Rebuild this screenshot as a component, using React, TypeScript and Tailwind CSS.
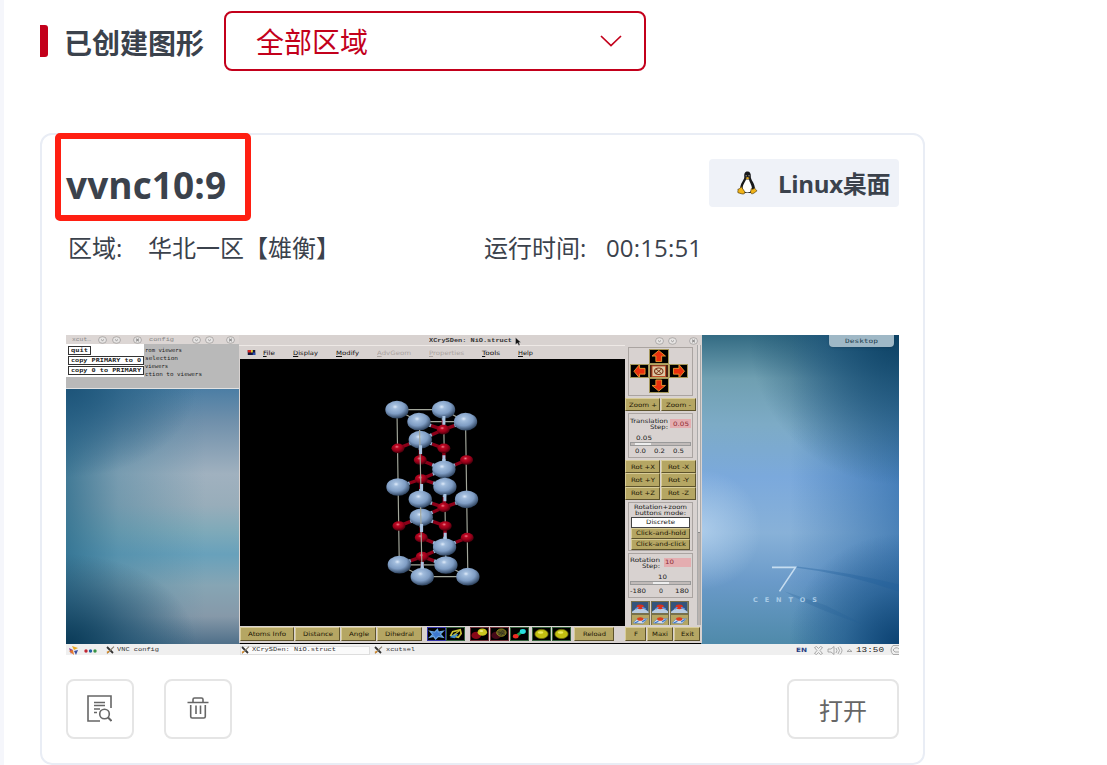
import { useLayoutEffect, useRef, useState, type ReactNode } from 'react';

/** Stretches one line of text horizontally to the width of its box. */
function Fit({ className, children }: { className: string; children: ReactNode }) {
  const box = useRef<HTMLSpanElement>(null);
  const text = useRef<HTMLSpanElement>(null);
  const [scale, setScale] = useState<number | null>(null);
  useLayoutEffect(() => {
    if (!box.current || !text.current || scale !== null) return;
    setScale(box.current.getBoundingClientRect().width / text.current.getBoundingClientRect().width);
  }, [scale]);
  return (
    <span ref={box} className={`block shrink-0 whitespace-nowrap leading-none ${className}`}>
      <span ref={text} className="inline-block origin-left align-top" style={{ transform: scale ? `scaleX(${scale})` : undefined }}>
        {children}
      </span>
    </span>
  );
}

function Tan({ className = '', children }: { className?: string; children: ReactNode }) {
  return (
    <div className={`flex shrink-0 items-center justify-center border border-t-[#d8cc98] border-l-[#d8cc98] border-r-[#5d532c] border-b-[#5d532c] bg-[#b5a663] text-[6px] text-[#1d1705] ${className}`}>
      {children}
    </div>
  );
}

const ni = [
  [80, 239], [220, 239], [150, 329], [221, 418], [83, 471], [224, 470], [153, 562], [223, 651],
  [87, 704], [227, 705], [146, 275], [286, 275], [150, 508], [289, 508], [156, 740], [293, 740],
];
const ox = [
  [83, 355], [219, 299], [221, 355], [150, 390], [289, 390], [153, 447],
  [221, 532], [86, 588], [225, 588], [153, 623], [291, 623], [156, 680],
];
const bonds = [
  [219, 299, 220, 239], [219, 299, 146, 275], [219, 299, 286, 275], [219, 299, 150, 329],
  [150, 329, 83, 355], [150, 329, 221, 355], [150, 329, 150, 390], [221, 418, 221, 355],
  [221, 418, 150, 390], [221, 418, 289, 390], [221, 418, 153, 447], [153, 447, 83, 471],
  [153, 447, 224, 470], [153, 447, 150, 508], [221, 532, 224, 470], [221, 532, 150, 508],
  [221, 532, 289, 508], [221, 532, 153, 562], [153, 562, 86, 588], [153, 562, 225, 588],
  [153, 562, 153, 623], [223, 651, 225, 588], [223, 651, 153, 623], [223, 651, 291, 623],
  [223, 651, 156, 680], [156, 680, 87, 704], [156, 680, 227, 705], [156, 680, 156, 740],
];

function Crystal() {
  return (
    <svg className="block h-full w-full" viewBox="-391.5 87 1156.5 801" preserveAspectRatio="none">
      <defs>
        <radialGradient id="ni" cx="0.42" cy="0.34" r="0.66">
          <stop offset="0" stopColor="#dfebfa" />
          <stop offset="0.18" stopColor="#a2bddd" />
          <stop offset="0.6" stopColor="#7f9dc4" />
          <stop offset="1" stopColor="#2f4460" />
        </radialGradient>
        <radialGradient id="ox" cx="0.42" cy="0.34" r="0.66">
          <stop offset="0" stopColor="#f08090" />
          <stop offset="0.25" stopColor="#bc0822" />
          <stop offset="0.6" stopColor="#98001a" />
          <stop offset="1" stopColor="#40000a" />
        </radialGradient>
      </defs>
      <path d="M80 239H220L286 275H146ZM80 239L87 704M220 239L227 705M286 275L293 740M87 704L227 705L293 740H156Z" fill="none" stroke="#a3a79b" strokeWidth="3.5" />
      {bonds.map(([a, b, c, d], i) => {
        const mx = (a + c) / 2;
        const my = (b + d) / 2;
        const firstOx = ox.some(([x, y]) => x === a && y === b);
        return (
          <g key={i} strokeWidth="10">
            <path d={`M${a} ${b}L${mx} ${my}`} stroke={firstOx ? '#8c0018' : '#9bb7d6'} />
            <path d={`M${mx} ${my}L${c} ${d}`} stroke={firstOx ? '#9bb7d6' : '#8c0018'} />
          </g>
        );
      })}
      {ni.slice(0, 10).map(([x, y], i) => <ellipse key={i} cx={x} cy={y} rx="35" ry="26.5" fill="url(#ni)" />)}
      {ox.map(([x, y], i) => <ellipse key={i} cx={x} cy={y} rx="19.5" ry="14.5" fill="url(#ox)" />)}
      {ni.slice(10).map(([x, y], i) => <ellipse key={i} cx={x} cy={y} rx="35" ry="26.5" fill="url(#ni)" />)}
      <path d="M148 300L152 484M151 532L155 716" stroke="#a3a79b" strokeWidth="3.5" />
      <path d="M151 346V372M221 258V284M221 376V394M224 492V514M154 582V606M225 608V628M154 462V484M156 696V716" stroke="#a9c4e2" strokeWidth="9" />
    </svg>
  );
}

function Round() {
  return <svg className="h-[8px] w-[9px] shrink-0" viewBox="0 0 9 8"><ellipse cx="4.5" cy="4" rx="4" ry="3.3" fill="#e6e4e3" stroke="#9b9896" strokeWidth=".7" /><path d="M3 3.5l1.500 1.200L6 3.500" fill="none" stroke="#777" strokeWidth=".7" /></svg>;
}
function Close() {
  return <svg className="h-[8px] w-[9px] shrink-0" viewBox="0 0 9 8"><ellipse cx="4.5" cy="4" rx="4" ry="3.3" fill="#e6e4e3" stroke="#9b9896" strokeWidth=".7" /><path d="M3 2.700l3 2.600M6 2.700l-3 2.600" stroke="#666" strokeWidth=".8" /></svg>;
}

function Arrow({ turn }: { turn: string }) {
  return (
    <div className="h-[14.5px] w-[19.5px] border border-[#a5975a] bg-black">
      <svg className="h-full w-full" viewBox="-9 -6.5 18 13">
        <g className={turn}><path d="M0-6L7-.2H3V5.500H-3V-.2H-7Z" fill="#e9300f" stroke="#f0a030" strokeWidth=".9" /></g>
      </svg>
    </div>
  );
}

function XMark() {
  return <svg className="h-[8px] w-[9px] shrink-0" viewBox="0 0 9 8"><path d="M1 1l6 6" stroke="#333" strokeWidth="1.8" /><path d="M8 .6L1 7.4" stroke="#8a8170" strokeWidth="1.2" /><path d="M1 6.5l2-1" stroke="#d78a28" strokeWidth="1.4" /></svg>;
}

function Glyph({ kind }: { kind: string }) {
  const frame = kind === 'mesh' ? 'border-[#3434a8]' : kind === 'balls' || kind === 'wire' ? 'border-[#703038]' : 'border-[#33603a]';
  return (
    <svg className={`h-[14px] w-[19px] border bg-black ${frame}`} viewBox="0 0 18 13" preserveAspectRatio="none">
      {kind === 'mesh' && <path d="M2 3.500l5 1 3-3 1 3 5-1-3 3 3 3.500-5-1-3 3-2-3-4 1 3-3z" fill="#3e78cc" stroke="#6aa6e0" strokeWidth="1.300" />}
      {kind === 'ring' && <><path d="M4 8l2-4 8-2 1 4-3 4z" fill="none" stroke="#c9c032" strokeWidth="1.8" /><path d="M3 10l5-4 4 1-4 4z" fill="#3f8dcc" /><path d="M7 8l6-5" stroke="#c9c032" strokeWidth="1.300" /></>}
      {kind === 'balls' && <><ellipse cx="5.5" cy="8" rx="5" ry="4" fill="#880818" /><ellipse cx="12" cy="4.5" rx="5" ry="3.9" fill="#c9c520" /><ellipse cx="11" cy="3.300" rx="2" ry="1.100" fill="#eeeb80" /></>}
      {kind === 'wire' && <><ellipse cx="5.5" cy="8" rx="5" ry="4" fill="#450818" /><ellipse cx="11" cy="5" rx="5" ry="4" fill="#5e5720" stroke="#aaa020" strokeWidth=".8" /><path d="M7 4l8 3M8 8l5-6M10 9l4-6" stroke="#222" strokeWidth=".6" /></>}
      {kind === 'stick' && <><path d="M5 9l8-6" stroke="#12a052" strokeWidth="3" /><ellipse cx="5" cy="9" rx="3" ry="2.4" fill="#ee2a20" /><ellipse cx="12.5" cy="3.8" rx="3.2" ry="2.6" fill="#28dede" /></>}
      {kind === 'yellow' && <><ellipse cx="9" cy="6.5" rx="7" ry="5" fill="#c2be10" stroke="#6f6d10" strokeWidth=".8" /><ellipse cx="8" cy="4.8" rx="3" ry="1.300" fill="#ecea60" /></>}
    </svg>
  );
}

function PlaneIcon({ flip }: { flip?: boolean }) {
  return (
    <svg className="h-[13.5px] w-[18.5px] border border-[#77704c] bg-[#b5a663]" viewBox="0 0 18 13" preserveAspectRatio="none">
      {flip ? (
        <><path d="M1 9l5-5h11l-5 6z" fill="#cfdcec" stroke="#5b7898" strokeWidth=".6" /><ellipse cx="9" cy="4.500" rx="3.500" ry="2" fill="#d9401e" /><path d="M3 9l4-2M11 8l4-3" stroke="#3976cf" strokeWidth="1.300" /></>
      ) : (
        <><path d="M0 0h18v13H0z" fill="#34547c" /><path d="M0 11l5-4h8l5 4v2H0z" fill="#b9cbe0" /><ellipse cx="9" cy="5.500" rx="4" ry="2.800" fill="#d9301e" /><path d="M4 8l3-2M11 6l4 2" stroke="#5a96e6" strokeWidth="1.500" /></>
      )}
    </svg>
  );
}

function MenuWord({ className, children }: { className: string; children: string }) {
  return <Fit className={className}><span className="underline decoration-[0.5px] underline-offset-1">{children[0]}</span>{children.slice(1)}</Fit>;
}

function SidePanel() {
  return (
    <div className="flex h-[280px] w-[76px] shrink-0 bg-[#d8d2d0]">
      <div className="flex w-[72px] flex-col overflow-hidden">
        <div className="mt-[2px] ml-[3px] flex h-[49px] w-[65px] shrink-0 flex-col items-center border border-[#aaa4a1] pt-px pr-[3px]">
          <Arrow turn="" />
          <div className="flex">
            <Arrow turn="-rotate-90" />
            <div className="h-[14.5px] w-[19.5px] border border-[#b5a663] bg-[#4b2013]">
              <svg className="h-full w-full" viewBox="0 0 18 13"><rect x="2" y="1" width="14" height="11" fill="#dcc8a4" stroke="#c24c26" /><ellipse cx="9" cy="6.5" rx="4.4" ry="3.4" fill="none" stroke="#7b3518" strokeWidth="1.2" /><path d="M6 4l6 5M12 4L6 9" stroke="#7b3518" /></svg>
            </div>
            <Arrow turn="rotate-90" />
          </div>
          <Arrow turn="rotate-180" />
        </div>
        <div className="mt-[2px] flex shrink-0 gap-px">
          <Tan className="h-[13px] w-[35px]"><Fit className="w-[28px]">Zoom +</Fit></Tan>
          <Tan className="h-[13px] w-[35px]"><Fit className="w-[25px]">Zoom -</Fit></Tan>
        </div>
        <div className="mt-[2px] ml-[3px] flex h-[45px] w-[65px] shrink-0 flex-col border border-[#aaa4a1] px-px pt-[4px] text-[6px] text-[#222]">
          <div className="flex justify-between">
            <div className="flex flex-col items-end"><Fit className="w-[38px]">Translation</Fit><Fit className="w-[18px]">Step:</Fit></div>
            <div className="mt-px flex h-[9px] w-[21px] items-center justify-center bg-[#e4adb0] text-[#8d2b32]"><Fit className="w-[16px]">0.05</Fit></div>
          </div>
          <Fit className="mt-[5px] ml-[6px] w-[16px]">0.05</Fit>
          <div className="mt-px flex h-[4px] shrink-0 border border-[#999] bg-[#c1bbb9]"><div className="ml-1 w-4 bg-[#eee]" /></div>
          <div className="mt-[2px] flex gap-[8px] pl-[5px]"><Fit className="w-[11px]">0.0</Fit><Fit className="w-[11px]">0.2</Fit><Fit className="w-[11px]">0.5</Fit></div>
        </div>
        <div className="mt-[2px] flex shrink-0 flex-col">
          {['X', 'Y', 'Z'].map((a) => (
            <div key={a} className="flex gap-px">
              <Tan className="h-[13.3px] w-[35px]"><Fit className="w-[24px]">Rot +{a}</Fit></Tan>
              <Tan className="h-[13.3px] w-[35px]"><Fit className="w-[21px]">Rot -{a}</Fit></Tan>
            </div>
          ))}
        </div>
        <div className="mt-[2px] ml-[3px] flex h-[49px] w-[65px] shrink-0 flex-col items-center border border-[#aaa4a1] pt-px text-[6px] text-[#222]">
          <Fit className="w-[53px]">Rotation+zoom</Fit>
          <Fit className="w-[51px]">buttons mode:</Fit>
          <div className="mt-px flex h-[11px] w-[59px] shrink-0 items-center justify-center border border-[#444] bg-white"><Fit className="w-[29px]">Discrete</Fit></div>
          <Tan className="h-[11px] w-[59px]"><Fit className="w-[50px]">Click-and-hold</Fit></Tan>
          <Tan className="h-[11px] w-[59px]"><Fit className="w-[50px]">Click-and-click</Fit></Tan>
        </div>
        <div className="mt-[2px] ml-[3px] flex h-[45px] w-[65px] shrink-0 flex-col border border-[#aaa4a1] px-px pt-[3px] text-[6px] text-[#222]">
          <div className="flex justify-between">
            <div className="flex flex-col items-end"><Fit className="w-[30px]">Rotation</Fit><Fit className="w-[18px]">Step:</Fit></div>
            <div className="mt-px flex h-[9px] w-[27px] items-center bg-[#e4adb0] pl-px text-[#8d2b32]"><Fit className="w-[9px]">10</Fit></div>
          </div>
          <Fit className="mt-[5px] ml-[28px] w-[9px]">10</Fit>
          <div className="mt-px flex h-[4px] shrink-0 justify-center border border-[#999] bg-[#c1bbb9]"><div className="w-4 bg-[#eee]" /></div>
          <div className="mt-[3px] flex justify-between pr-[2px]"><Fit className="w-[16px]">-180</Fit><Fit className="w-[4px]">0</Fit><Fit className="w-[14px]">180</Fit></div>
        </div>
        <div className="mt-[3px] ml-[6px] grid w-[58px] shrink-0 grid-cols-3 gap-x-px">
          <PlaneIcon /><PlaneIcon /><PlaneIcon /><PlaneIcon flip /><PlaneIcon flip /><PlaneIcon flip />
        </div>
      </div>
      <div className="flex w-[4px] flex-col border-x border-[#aaa] bg-[#b9b3b0]"><div className="h-[188px] border-b border-[#888] bg-[#e1dcda]" /></div>
    </div>
  );
}

function RemoteDesktop() {
  return (
    <div className="relative flex h-[320px] w-[833px] flex-col overflow-hidden font-['DejaVu_Sans',sans-serif]">
      <div className="flex h-[308.5px] w-full">
        <div className="w-[174px] bg-[radial-gradient(ellipse_130px_90px_at_0%_17%,#1d5479_0%,#22597f99_45%,transparent_100%),radial-gradient(ellipse_130px_90px_at_0%_100%,#0b3b58_0%,#17486799_50%,transparent_100%),linear-gradient(90deg,#2a6c8ccc_0%,#3b7c9a66_30%,transparent_80%),linear-gradient(180deg,#4a7da4_17%,#7090ab_28%,#a0b1bf_45%,#98adba_55%,#80aab9_63%,#68a1bb_71%,#86a5b4_81%,#8699a9_91%,#4f6f89_100%)]" />
        <div className="flex-1 bg-black" />
        <div className="relative w-[198px] bg-[radial-gradient(ellipse_60px_60px_at_0%_63%,#bdd8f2aa_0%,transparent_100%),radial-gradient(ellipse_150px_150px_at_100%_0%,#0d4264_0%,#174d70aa_45%,transparent_100%),radial-gradient(ellipse_110px_110px_at_100%_100%,#0c4272_0%,#1a528488_50%,transparent_100%),linear-gradient(90deg,transparent_45%,#2262a299_100%),linear-gradient(180deg,#336b83_0%,#6f9fb1_14%,#7dabc6_29%,#7ba9dc_46%,#88b1d8_64%,#6a9ac9_80%,#4f8aaa_100%)]">
          <svg className="block h-full w-full" viewBox="0 0 198 308" preserveAspectRatio="none">
            <path d="M94 232Q145 238 198 256V249Q150 237 96 231Z" fill="#1f5f9a" opacity=".35" />
            <path d="M84 256Q110 272 160 288L125 270Z" fill="#245f98" opacity=".25" />
            <path d="M71 232H94.500L78.500 256" fill="none" stroke="#cfe3f4" strokeWidth="1.600" opacity=".9" />
          </svg>
          <div className="absolute top-[262px] left-[52px] flex w-[64px] justify-between text-[6.5px] leading-none font-bold text-[#a9cbe6]">
            {'CENTOS'.split('').map((c, i) => <span key={i}>{c}</span>)}
          </div>
        </div>
      </div>

      <div className="flex h-[11.5px] items-center bg-[#efefef] pt-[2px] font-['Liberation_Mono',monospace] text-[6px] text-[#333]">
        <svg className="ml-[2px] h-[9px] w-[11px]" viewBox="0 0 11 9"><path d="M1 2l4 2-2 4z" fill="#8a3d92" /><path d="M4 0l2 4 4-2z" fill="#e9a820" /><path d="M10 4L6 5l2 4z" fill="#3b4fa0" /><path d="M1 5l4-1 1 5z" fill="#e4762c" /></svg>
        <svg className="ml-[5px] h-[5px] w-[13px]" viewBox="0 0 13 5"><circle cx="2" cy="3" r="1.7" fill="#c02632" /><circle cx="6.500" cy="3" r="1.700" fill="#2261a8" /><circle cx="11" cy="3" r="1.700" fill="#379445" /></svg>
        <div className="ml-[9px] flex w-[134px] items-center gap-[2px]"><XMark /><Fit className="w-[42px]">VNC config</Fit></div>
        <div className="flex h-[9px] w-[130px] items-center gap-[2px] border border-[#ddd] bg-[#fafafa]"><XMark /><Fit className="w-[84px]">XCrySDen: NiO.struct</Fit></div>
        <div className="ml-[4px] flex items-center gap-[3px]"><XMark /><Fit className="w-[29px]">xcutsel</Fit></div>
        <div className="ml-auto flex items-center">
          <Fit className="w-[11px] font-['DejaVu_Sans'] font-bold text-[#263d82]">EN</Fit>
          <svg className="ml-[6px] h-[9px] w-[53px]" viewBox="0 0 53 9" fill="none" stroke="#999" strokeWidth=".8"><path d="M1.500 1.500l2-1 2 2 2-2 2 1-2.500 3 2.500 3-2 1-2-2-2 2-2-1 2.500-3z" /><path d="M15 3h3l3-2.500v8L18 6h-3zM23 2q2 2.500 0 5M25 1q3 3.500 0 7M27 .5q4 4 0 8" /><path d="M34 5.500l2.500-2 2.500 2z" /></svg>
          <Fit className="-ml-[10px] w-[28px] text-[7px] text-[#222]">13:50</Fit>
          <svg className="ml-[4px] h-[10px] w-[11px]" viewBox="0 0 11 10" fill="none" stroke="#aaa"><path d="M11 .5H5Q1 5 5 9.500h6M5 5q3-4 6-1M5 5l2 2h4" /></svg>
        </div>
      </div>

      <div className="absolute top-0 left-[763px] flex h-[12px] w-[65px] items-center justify-center rounded-b-sm bg-[#9fb8c6] text-[6px] text-[#23404f] shadow-sm">
        <Fit className="w-[33px] font-['DejaVu_Sans_Mono']">Desktop</Fit>
      </div>

      <div className="absolute top-0 left-0 flex h-[54px] w-[173px] flex-col border-b border-[#e2e2e2] bg-[#b9b9b9] text-[#222]">
        <div className="flex h-[9px] items-center bg-[#dcd6d4] pt-px font-['Liberation_Mono'] text-[6px] text-[#888]">
          <Fit className="ml-[6px] w-[19px]">xcut…</Fit>
          <div className="ml-[7px] flex gap-[5px]"><Round /><Round /></div><div className="ml-[12px]"><Close /></div>
          <Fit className="ml-[7px] w-[25px]">config</Fit>
          <div className="ml-[18px] flex gap-[4px]"><Round /><Round /></div><div className="ml-[12px]"><Close /></div>
        </div>
        <div className="flex font-['DejaVu_Sans_Mono']">
          <div className="flex h-[33px] w-[78px] flex-col items-start gap-px bg-white px-[2px] pt-[2px] text-[5.5px] font-bold">
            <div className="flex h-[9px] items-center border border-[#333] px-[2px]"><Fit className="w-[17px]">quit</Fit></div>
            <div className="flex h-[9px] items-center border border-[#333] px-[2px]"><Fit className="w-[70px]">copy PRIMARY to 0</Fit></div>
            <div className="flex h-[9px] items-center border border-[#333] px-[2px]"><Fit className="w-[70px]">copy 0 to PRIMARY</Fit></div>
          </div>
          <div className="flex flex-col gap-[2.6px] pt-[4px] pl-px text-[5.5px]">
            <Fit className="w-[37px]">rom viewers</Fit><Fit className="w-[33px]">selection</Fit><Fit className="w-[23px]">viewers</Fit><Fit className="w-[57px]">ction to viewers</Fit>
          </div>
        </div>
      </div>

      <div className="absolute top-0 left-[173px] flex h-[308px] w-[463px] flex-col bg-[#d8d2d0]">
        <div className="flex h-[10px] items-center pt-px">
          <Fit className="ml-[190px] w-[83px] font-['Liberation_Mono'] text-[6px] font-bold text-[#333]">XCrySDen: NiO.struct</Fit>
          <div className="ml-[143px] flex gap-[4px]"><Round /><Round /></div><div className="ml-[12px]"><Close /></div>
        </div>
        <div className="flex flex-1">
          <div className="flex w-[386px] flex-col">
            <div className="flex h-[14px] items-center border-t border-[#eee9e6] text-[6px] text-[#111]">
              <svg className="ml-[8px] h-[5px] w-[9px]" viewBox="0 0 9 6"><rect width="9" height="6" fill="#16163a" /><path d="M0 0h4v3H0z" fill="#d72623" /><path d="M4 0h2v3H4z" fill="#f5de36" /><path d="M6 3h3v3H6z" fill="#254bae" /></svg>
              <MenuWord className="ml-[7px] w-[12px]">File</MenuWord>
              <MenuWord className="ml-[18px] w-[25px]">Display</MenuWord>
              <MenuWord className="ml-[18px] w-[23px]">Modify</MenuWord>
              <div className="flex text-[#aaa3a0]"><MenuWord className="ml-[18px] w-[34px]">AdvGeom</MenuWord><MenuWord className="ml-[18px] w-[35px]">Properties</MenuWord></div>
              <MenuWord className="ml-[18px] w-[18px]">Tools</MenuWord>
              <MenuWord className="ml-[18px] w-[15px]">Help</MenuWord>
            </div>
            <div className="ml-px h-[267px] bg-black"><Crystal /></div>
            <div className="flex flex-1 items-center pb-px pl-px">
              <Tan className="h-[14px] w-[54px]"><Fit className="w-[38px]">Atoms Info</Fit></Tan>
              <Tan className="ml-px h-[14px] w-[45px]"><Fit className="w-[30px]">Distance</Fit></Tan>
              <Tan className="ml-px h-[14px] w-[35px]"><Fit className="w-[20px]">Angle</Fit></Tan>
              <Tan className="ml-px h-[14px] w-[45px]"><Fit className="w-[29px]">Dihedral</Fit></Tan>
              <div className="ml-[5px] flex"><Glyph kind="mesh" /><Glyph kind="ring" /></div>
              <div className="ml-[5px] flex gap-px"><Glyph kind="balls" /><Glyph kind="wire" /><Glyph kind="stick" /></div>
              <div className="ml-[3px] flex gap-px"><Glyph kind="yellow" /><Glyph kind="yellow" /></div>
              <Tan className="ml-[3px] h-[14px] w-[40px]"><Fit className="w-[23px]">Reload</Fit></Tan>
            </div>
          </div>
          <div className="flex flex-col">
            <SidePanel />
            <div className="flex flex-1 items-center gap-px">
              <Tan className="h-[14px] w-[21px]"><Fit className="w-[4px]">F</Fit></Tan>
              <Tan className="h-[14px] w-[26px]"><Fit className="w-[16px]">Maxi</Fit></Tan>
              <Tan className="h-[14px] w-[26px]"><Fit className="w-[13px]">Exit</Fit></Tan>
            </div>
          </div>
        </div>
      </div>
      <svg className="absolute top-[2px] left-[449px] h-[9px] w-[7px]" viewBox="0 0 7 9"><path d="M.5.5l5.500 5H3.800L5 8 3.800 8.500 2.500 6 .5 7.500z" fill="#111" stroke="#eee" strokeWidth=".3" /></svg>
    </div>
  );
}

function Penguin() {
  return (
    <svg className="h-[24px] w-[21px]" viewBox="0 0 21 24">
      <path d="M10.500.5C7.500.5 7 3 7.300 6 7.500 9 3 12 3.300 18L7 22h7l4-4C18 12 13.500 9 13.800 5.500 14 2.500 13 .5 10.500.5z" fill="#17181a" />
      <path d="M9 8.500c-1 3-4.200 6-3.200 10.500.8 3 7.500 3.300 8.700.5C16 15 12.500 12 12 8.500z" fill="#fff" />
      <circle cx="9.200" cy="4.800" r=".7" fill="#999" /><circle cx="12" cy="4.800" r=".7" fill="#999" />
      <path d="M8.500 7l2-1 2.100 1-2 1.600z" fill="#e5ab20" />
      <path d="M4.200 15.500l3.600 5.300c.6 2-1.200 2.700-3.600 1.900l-3.200-1c-.8-.5.400-2-.1-3.500 1.500-.2 2.300-.8 3.300-2.700zM14.300 17.500c1 1.300 2.700.5 3.300-.8.500 1.500 1.200 2.200 2.500 3l-3 2.300c-2 1.500-3.700.7-3.500-1.300z" fill="#f2b418" stroke="#3a2a06" strokeWidth=".6" />
    </svg>
  );
}

export default function App() {
  return (
    <div className="flex h-[765px] w-[1107px] overflow-hidden bg-white font-['Open_Sans','Noto_Sans_CJK_SC',sans-serif] text-[#3b424c]">
      <div className="w-1 shrink-0 bg-[#f5f6fb]" />
      <main className="flex flex-1 flex-col pl-9">
        <header className="flex h-[71px] items-start">
          <div className="mt-[25px] h-8 w-2 rounded-r-[3px] bg-[#c3001b]" />
          <h1 className="mt-[25px] ml-4 w-[160px] text-[28px] leading-9 font-bold whitespace-nowrap">已创建图形</h1>
          <button className="mt-[11px] flex h-[60px] w-[422px] items-center justify-between rounded-lg border-2 border-[#c3001b] pr-[22px] pl-[30px] text-[28px] leading-none text-[#c3001b]">
            <span className="pt-[2px]">全部区域</span>
            <svg className="h-[12px] w-[22px]" viewBox="0 0 22 12"><path d="M1 1l10 9.500L21 1" fill="none" stroke="#c3001b" strokeWidth="1.700" /></svg>
          </button>
        </header>

        <section className="relative mt-[62px] flex h-[632px] w-[885px] flex-col rounded-xl border-2 border-[#e9edf5] px-6">
          <div className="flex h-[72px] items-end justify-between">
            <h2 className="text-[37px] leading-[44px] font-bold tracking-[0.1px]">vvnc10:9</h2>
            <div className="flex h-12 w-[190px] items-center rounded bg-[#eff2f8] pl-[28px]">
              <Penguin />
              <span className="ml-[20px] pt-px text-[24px] leading-none font-bold tracking-[-0.3px] whitespace-nowrap">Linux桌面</span>
            </div>
          </div>
          <div className="mt-[28px] flex h-[26px] items-center pl-[2px] text-[24px] leading-none whitespace-nowrap">
            <span className="w-[80px]">区域:</span>
            <span className="w-[336px]">华北一区【雄衡】</span>
            <span className="w-[122px]">运行时间:</span>
            <span className="tracking-[0.15px]">00:15:51</span>
          </div>
          <div className="mt-[74px]"><RemoteDesktop /></div>
          <div className="mt-6 flex h-[60px] w-[833px] gap-[30px]">
            <button className="flex w-[68px] items-center justify-center rounded-lg border-2 border-[#e5e5e5] pr-px pb-px">
              <svg className="h-[27px] w-[25px]" viewBox="0 0 25 27" fill="none" stroke="#666" strokeWidth="1.600"><path d="M24 13V1H1v25h12" /><path d="M7 7.500h11M7 10.500h11M7 14h6M7 17.500h3" /><circle cx="17.500" cy="19" r="4.800" /><path d="M21 22.500l3.500 3.500" strokeWidth="2" /></svg>
            </button>
            <button className="flex w-[68px] items-center justify-center rounded-lg border-2 border-[#e5e5e5] pb-[2px]">
              <svg className="h-[22px] w-[22px]" viewBox="0 0 22 22" fill="none" stroke="#666" strokeWidth="1.600"><path d="M.5 5.500h21M6 5V2.500Q6 1 7.500 1h7Q16 1 16 2.500V5M3.700 8v11.500q0 1.500 1.500 1.500h11.600q1.500 0 1.500-1.500V8M9 8.500v8.500M13.500 8.500v8.500" /></svg>
            </button>
            <button className="ml-auto flex w-[112px] items-center justify-center rounded-lg border-2 border-[#e5e5e5] pt-[3px] text-[24px] leading-none text-[#666]">打开</button>
          </div>
          <div className="pointer-events-none absolute -top-[2px] left-[13px] h-[88px] w-[196px] rounded-[5px] border-[6px] border-[#ff1f12]" />
        </section>
      </main>
    </div>
  );
}
